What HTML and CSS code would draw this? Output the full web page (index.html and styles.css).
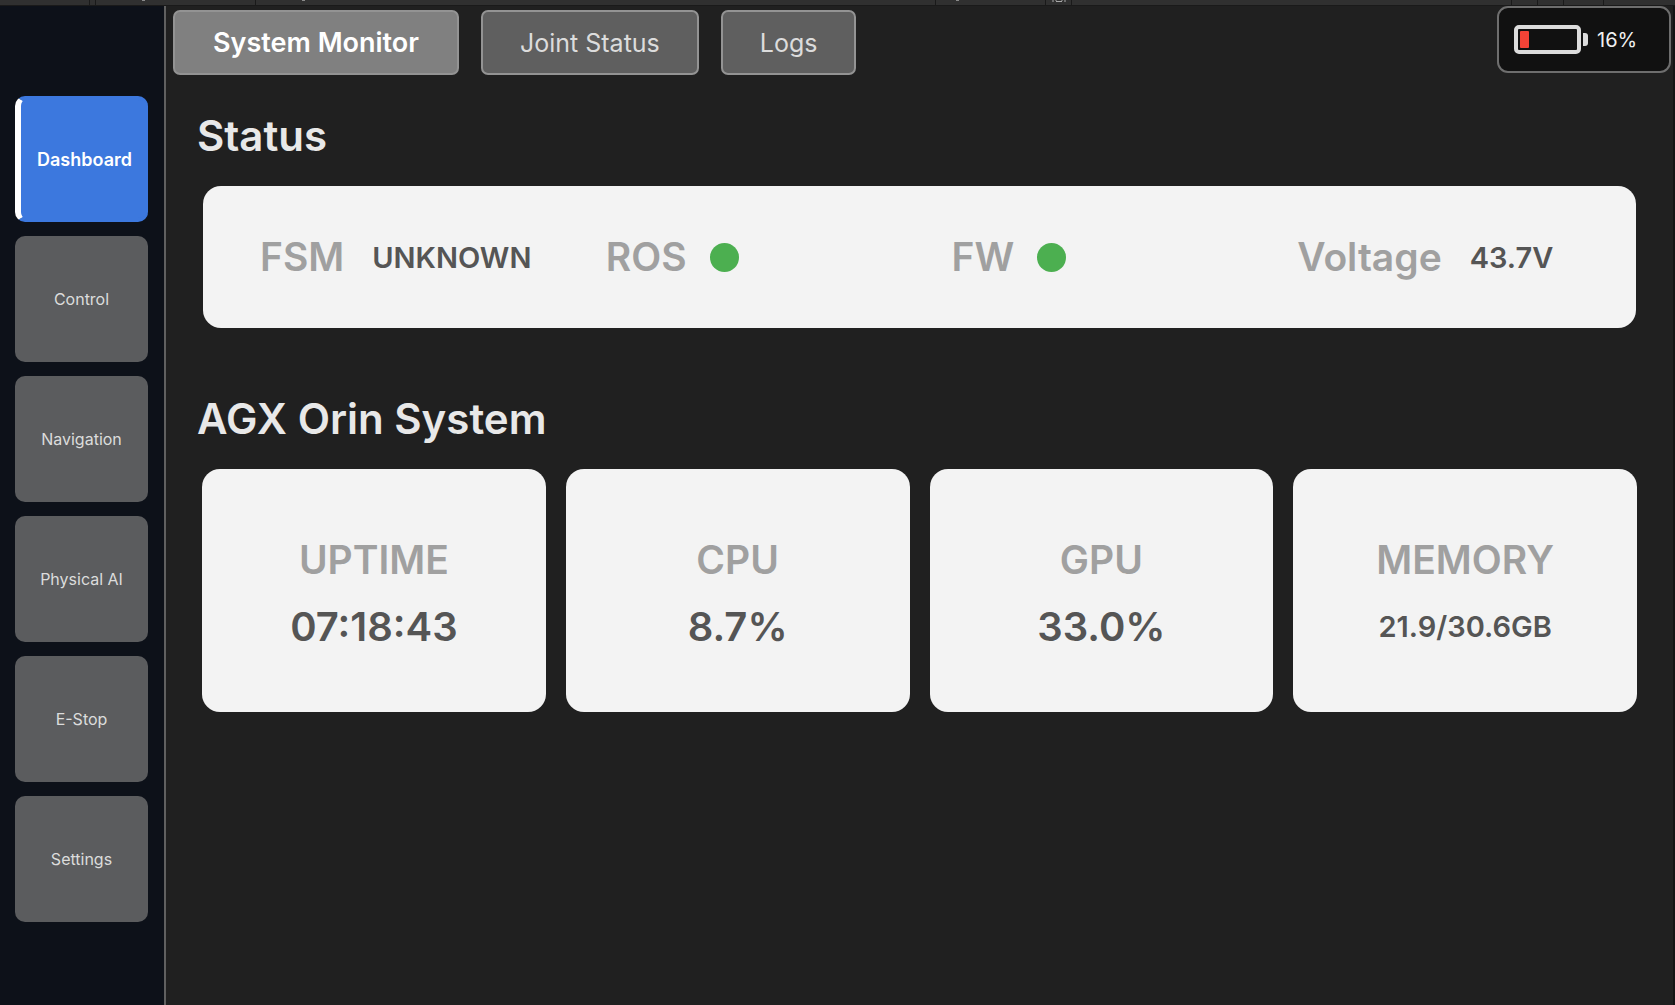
FILE: index.html
```html
<!DOCTYPE html>
<html lang="en">
<head>
  <meta charset="UTF-8">
  <meta name="viewport" content="width=device-width, initial-scale=1.0">
  <title>System Monitor</title>
  <link rel="stylesheet" href="styles.css">
</head>
<body>
  <div class="strip">
    <span class="strip-tab first"></span>
    <span class="strip-tab narrow"></span>
    <span class="strip-tab wide"><i class="mark"></i></span>
    <span class="strip-tab long"><i class="mark"></i></span>
    <span class="strip-tab middle"><i class="mark"></i></span>
    <span class="strip-tab tool">
      <svg width="14" height="2" viewBox="0 0 14 2">
        <path d="M1 0v2M4 0v1M10 0v1M13 0v2M4 1.5h6" stroke="#a8a8a8" fill="none"/>
      </svg>
    </span>
    <span class="strip-space"></span>
    <span class="strip-tab tool"></span>
    <span class="strip-tab tool"></span>
    <span class="strip-tab tool-wide"></span>
    <span class="strip-tab last"></span>
  </div>

  <div class="app">
    <!-- Sidebar -->
    <nav class="sidebar">
      <button class="nav-btn active">Dashboard</button>
      <button class="nav-btn">Control</button>
      <button class="nav-btn">Navigation</button>
      <button class="nav-btn">Physical AI</button>
      <button class="nav-btn">E-Stop</button>
      <button class="nav-btn">Settings</button>
    </nav>

    <main class="main">
      <!-- Tabs and battery -->
      <header class="topbar">
        <div class="tabs">
          <button class="tab active">System Monitor</button>
          <button class="tab">Joint Status</button>
          <button class="tab">Logs</button>
        </div>
        <div class="battery">
          <div class="battery-body">
            <div class="battery-level" style="width: 16%"></div>
          </div>
          <div class="battery-tip"></div>
          <span class="battery-text">16%</span>
        </div>
      </header>

      <section class="section">
        <h2>Status</h2>
        <div class="status-card">
          <div class="status-item">
            <span class="label">FSM</span>
            <span class="value">UNKNOWN</span>
          </div>
          <div class="status-item">
            <span class="label">ROS</span>
            <span class="dot"></span>
          </div>
          <div class="status-item">
            <span class="label">FW</span>
            <span class="dot"></span>
          </div>
          <div class="status-item">
            <span class="label">Voltage</span>
            <span class="value">43.7V</span>
          </div>
        </div>
      </section>

      <section class="section">
        <h2>AGX Orin System</h2>
        <div class="cards">
          <div class="card">
            <span class="label">UPTIME</span>
            <span class="card-value">07:18:43</span>
          </div>
          <div class="card">
            <span class="label">CPU</span>
            <span class="card-value">8.7%</span>
          </div>
          <div class="card">
            <span class="label">GPU</span>
            <span class="card-value">33.0%</span>
          </div>
          <div class="card">
            <span class="label">MEMORY</span>
            <span class="card-value small">21.9/30.6GB</span>
          </div>
        </div>
      </section>
    </main>
  </div>
</body>
</html>
```

FILE: styles.css
```css
* {
  box-sizing: border-box;
}

body {
  margin: 0;
  min-height: 100vh;
  display: flex;
  flex-direction: column;
  font-family: Inter, "Noto Sans", sans-serif;
  background-color: #202020;
  color: #e8e8e8;
}

button {
  font-family: inherit;
  cursor: pointer;
}

/* Window strip on top */
.strip {
  display: flex;
  height: 6px;
  background-color: #303030;
  border-bottom: 1px solid #1a1a1a;
}

.strip-tab {
  border-right: 1px solid #1a1a1a;
}

.strip-tab.first {
  width: 90px;
}

.strip-tab.narrow {
  width: 6px;
}

.strip-tab.wide {
  width: 160px;
  padding-left: 46px;
}

.strip-tab.long {
  width: 680px;
  padding-left: 46px;
}

.strip-tab.middle {
  width: 110px;
  padding-left: 20px;
}

.strip-tab .mark {
  display: block;
  width: 3px;
  height: 1px;
  background-color: #8a8a8a;
}

.strip-tab svg {
  display: block;
  margin: 0 auto;
}

.strip-space {
  flex: 1;
  border-right: 1px solid #1a1a1a;
}

.strip-tab.tool {
  width: 26px;
}

.strip-tab.tool-wide {
  width: 40px;
}

.strip-tab.last {
  width: 71px;
  border-right: none;
}

.app {
  display: flex;
  flex: 1;
}

/* Sidebar */
.sidebar {
  width: 166px;
  padding: 90px 16px 15px 15px;
  display: flex;
  flex-direction: column;
  gap: 14px;
  background-color: #0d1119;
  border-right: 2px solid #606060;
}

.nav-btn {
  height: 126px;
  padding: 0;
  border: none;
  border-radius: 10px;
  background-color: #5b5c5e;
  color: #dcdcdc;
  font-size: 16px;
}

.nav-btn.active {
  background-color: #3c78de;
  border-top: 4px solid #3c78de;
  border-bottom: 4px solid #3c78de;
  border-left: 6px solid #fff;
  color: #fff;
  font-size: 18px;
  font-weight: 600;
}

/* Main area */
.main {
  flex: 1;
  border-right: 2px solid #141414;
}

.topbar {
  display: flex;
  justify-content: space-between;
  align-items: flex-start;
  padding-left: 7px;
}

.tabs {
  display: flex;
  gap: 22px;
  padding-top: 4px;
}

.tab {
  height: 65px;
  padding: 0 37px;
  border: 2px solid #939393;
  border-radius: 7px;
  background-color: #5f5f5f;
  color: #dcdcdc;
  font-size: 25px;
}

.tab.active {
  padding: 0 38px;
  background-color: #808080;
  color: #fff;
  font-size: 27px;
  font-weight: 600;
}

.battery {
  display: flex;
  align-items: center;
  width: 174px;
  height: 67px;
  margin-right: 2px;
  padding: 0 15px;
  border: 2px solid #6e6e6e;
  border-radius: 11px;
  background-color: #111;
}

.battery-body {
  width: 67px;
  height: 29px;
  padding: 2px;
  border: 4px solid #dcdcdc;
  border-radius: 5px;
}

.battery-level {
  height: 100%;
  background-color: #f44336;
  border-radius: 1px;
}

.battery-tip {
  width: 5px;
  height: 13px;
  margin-left: 2px;
  background-color: #dcdcdc;
  border-radius: 0 3px 3px 0;
}

.battery-text {
  margin-left: 9px;
  font-size: 20px;
  color: #f0f0f0;
}

.section {
  padding: 0 36px 0 31px;
}

h2 {
  margin: 0;
  padding-top: 35px;
  font-size: 42px;
  line-height: 52px;
  font-weight: 600;
}

.status-card {
  display: grid;
  grid-template-columns: repeat(4, 1fr);
  align-items: center;
  height: 142px;
  margin: 24px 1px 30px 6px;
  padding: 0 25px;
  border-radius: 18px;
  background-color: #f3f3f3;
}

.status-item {
  display: flex;
  align-items: center;
  padding-left: 32px;
}

.label {
  font-size: 39px;
  line-height: 48px;
  font-weight: 600;
  color: #a0a0a0;
}

.value {
  margin-left: 28px;
  font-size: 29px;
  font-weight: 600;
  color: #555;
}

.dot {
  width: 29px;
  height: 29px;
  margin-left: 23px;
  border-radius: 50%;
  background-color: #4caf50;
}

/* System cards */
.cards {
  display: grid;
  grid-template-columns: repeat(4, 1fr);
  gap: 20px;
  margin: 24px 0 0 5px;
}

.card {
  display: flex;
  flex-direction: column;
  align-items: center;
  justify-content: center;
  gap: 19px;
  height: 243px;
  padding-top: 5px;
  border-radius: 18px;
  background-color: #f3f3f3;
}

.card-value {
  font-size: 40px;
  line-height: 48px;
  font-weight: 600;
  color: #555;
}

.card-value.small {
  font-size: 29px;
}
```
